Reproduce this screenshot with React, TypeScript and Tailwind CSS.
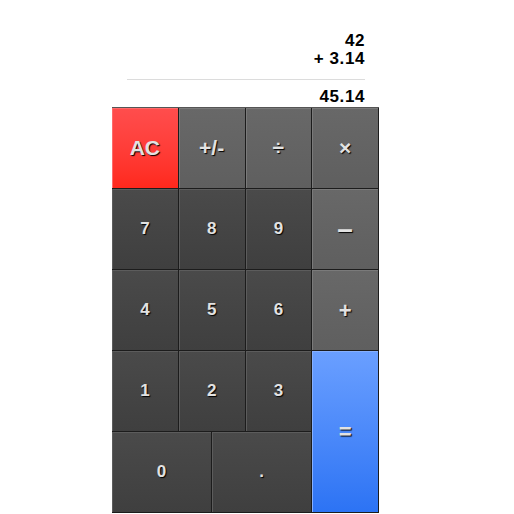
import React from 'react';

type Key = {
  label: string;
  kind: 'num' | 'op' | 'clear' | 'eq';
  span?: string;
  size?: string;
};

const keys: Key[] = [
  { label: 'AC', kind: 'clear', size: 'text-[21px]' },
  { label: '+/-', kind: 'op', size: 'text-[21px]' },
  { label: '÷', kind: 'op', size: 'text-[21px]' },
  { label: '×', kind: 'op', size: 'text-[21px]' },
  { label: '7', kind: 'num' },
  { label: '8', kind: 'num' },
  { label: '9', kind: 'num' },
  { label: '–', kind: 'op', size: 'text-[28px]' },
  { label: '4', kind: 'num' },
  { label: '5', kind: 'num' },
  { label: '6', kind: 'num' },
  { label: '+', kind: 'op', size: 'text-[22px]' },
  { label: '1', kind: 'num' },
  { label: '2', kind: 'num' },
  { label: '3', kind: 'num' },
  { label: '=', kind: 'eq', size: 'text-[22px]', span: 'col-span-2 row-span-2' },
  { label: '0', kind: 'num', span: 'col-span-3' },
  { label: '.', kind: 'num', span: 'col-span-3' },
];

const kindStyles = {
  num: 'bg-gradient-to-b from-[#4a4a4a] to-[#3f3f3f] shadow-[inset_1px_1px_0_#5c5c5c]',
  op: 'bg-gradient-to-b from-[#686868] to-[#5f5f5f] shadow-[inset_1px_1px_0_#7a7a7a]',
  clear: 'bg-gradient-to-b from-[#ff4d4d] to-[#ff281c] shadow-[inset_1px_1px_0_#ff6a6a]',
  eq: 'bg-gradient-to-b from-[#6a9fff] to-[#2c73f4] shadow-[inset_1px_1px_0_#86b0ff]',
};

export default function App() {
  return (
    <div className="min-h-[514px] bg-white">
      <div className="ml-[112px] w-[267px] font-['Liberation_Sans',Arial,sans-serif]">
        <div className="pt-[32px] pl-[15px] pr-[14px] text-right font-bold text-[17px] leading-[18px] tracking-[0.6px] text-black">
          <div>42</div>
          <div>+ 3.14</div>
          <div className="mt-[11px] border-t border-[#dcdcdc] pt-[8px] pb-[1px]">45.14</div>
        </div>
        <div className="grid grid-cols-8 auto-rows-[81px] border-t border-[#555]">
          {keys.map((k) => (
            <button
              key={k.label}
              className={`${k.span ?? 'col-span-2'} ${kindStyles[k.kind]} ${k.size ?? 'text-[17px]'} flex items-center justify-center border-r border-b border-[#1c1c1c] font-bold text-[#e2e2e2] [text-shadow:1px_1px_1px_#000]`}
            >
              {k.label}
            </button>
          ))}
        </div>
      </div>
    </div>
  );
}
